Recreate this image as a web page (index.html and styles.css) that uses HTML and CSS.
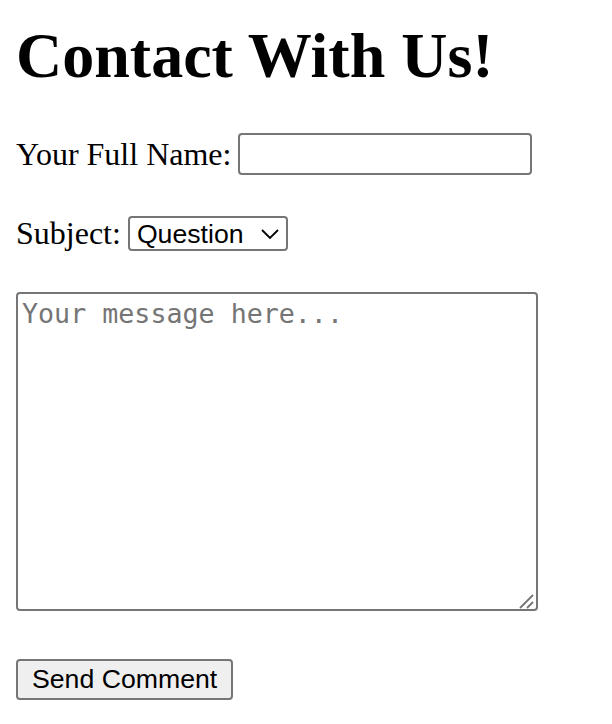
FILE: index.html
```html
<!DOCTYPE html>
<html lang="en">
<head>
<meta charset="utf-8">
<title>Contact With Us!</title>
<link rel="stylesheet" href="styles.css">
</head>
<body>
<h1 class="title">Contact With Us!</h1>
<form class="contact">
  <label class="row">Your Full Name: <input type="text" class="field"></label>
  <label class="row">Subject:
    <span class="select-wrap">
      <select class="select"><option>Question</option><option>Feedback</option></select>
      <svg class="chev" width="18" height="10" viewBox="0 0 18 10"><path d="M1 1 L9 9 L17 1" fill="none" stroke="#000" stroke-width="1.8"/></svg>
    </span>
  </label>
  <div class="message-wrap">
    <textarea class="message" placeholder="Your message here..."></textarea>
    <svg class="grip" width="16" height="16" viewBox="0 0 16 16"><path d="M1 15 L14 2 M8 15 L14 9" stroke="#767676" stroke-width="1.8" fill="none"/></svg>
  </div>
  <div class="actions"><button type="submit" class="send">Send Comment</button></div>
</form>
</body>
</html>
```

FILE: styles.css
```css
html, body {
  background: #fff;
}
body {
  margin: 16px;
  font-family: "Liberation Serif", "Times New Roman", serif;
  font-size: 32px;
  color: #000;
}
.title {
  font-size: 64px;
  font-weight: bold;
  line-height: normal;
  margin: 3px 0 0;
}
.contact {
  display: flex;
  flex-direction: column;
  align-items: flex-start;
  gap: 40px;
  margin-top: 40px;
}
.row {
  display: flex;
  align-items: center;
  gap: 7px;
}
.field {
  box-sizing: border-box;
  width: 294px;
  height: 42px;
  border: 2px solid #767676;
  border-radius: 4px;
  padding: 2px 4px;
  font-family: "Liberation Sans", Arial, sans-serif;
  font-size: 26.67px;
  margin: 0;
  background: #fff;
}
.select-wrap {
  position: relative;
  display: inline-block;
}
.select {
  -webkit-appearance: none;
  appearance: none;
  box-sizing: border-box;
  width: 160px;
  height: 35px;
  border: 2px solid #767676;
  border-radius: 4px;
  padding: 0 0 0 7px;
  margin: 0;
  font-family: "Liberation Sans", Arial, sans-serif;
  font-size: 26.67px;
  color: #000;
  background: #fff;
  display: block;
}
.chev {
  position: absolute;
  right: 9px;
  top: 13px;
  pointer-events: none;
}
.message-wrap {
  position: relative;
}
.message {
  box-sizing: border-box;
  display: block;
  width: 522px;
  height: 319px;
  border: 2px solid #767676;
  border-radius: 4px;
  padding: 4px;
  margin: 0;
  resize: none;
  font-family: "DejaVu Sans Mono", monospace;
  font-size: 26.67px;
  background: #fff;
}
.message::placeholder {
  color: #757575;
}
.grip {
  position: absolute;
  right: 3px;
  bottom: 2px;
  pointer-events: none;
}
.actions {
  margin-top: 8px;
}
.send {
  box-sizing: border-box;
  height: 41px;
  border: 2px solid #767676;
  border-radius: 4px;
  background: #efefef;
  padding: 2px 14px;
  margin: 0;
  font-family: "Liberation Sans", Arial, sans-serif;
  font-size: 26.67px;
  color: #000;
}
```
